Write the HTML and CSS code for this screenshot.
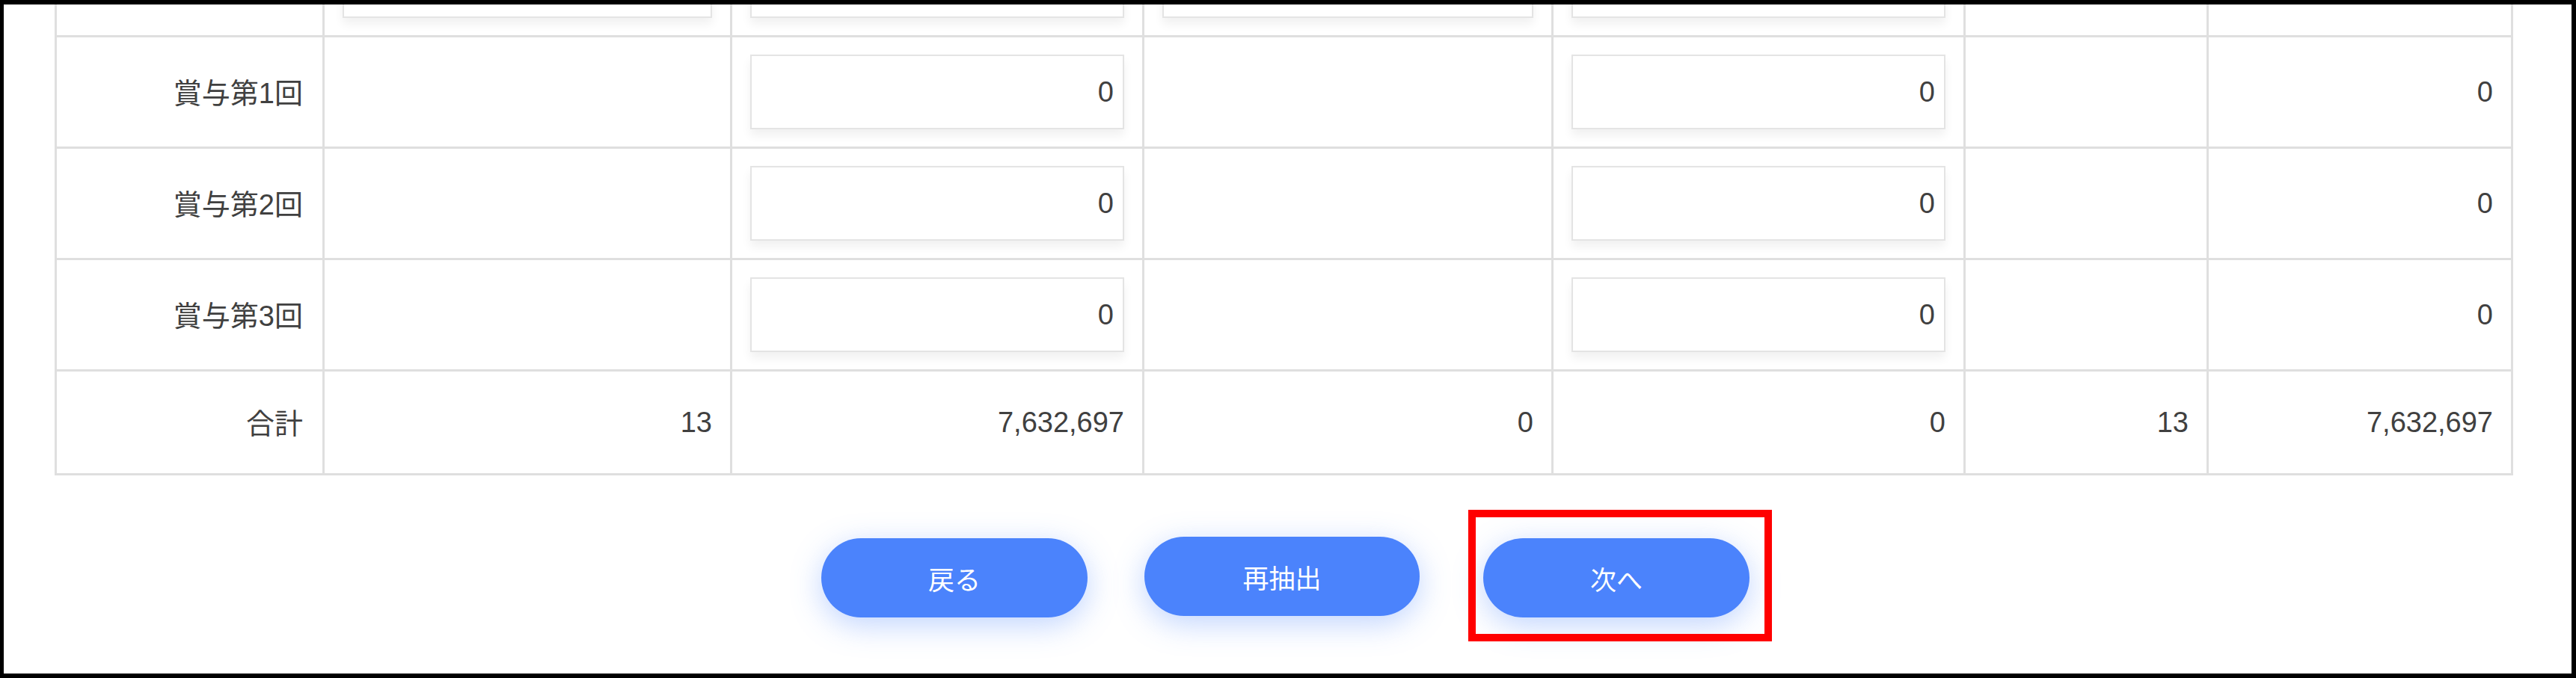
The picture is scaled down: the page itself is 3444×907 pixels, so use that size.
FILE: index.html
```html
<!DOCTYPE html>
<html lang="ja">
<head>
    <meta charset="UTF-8">
    <title>賞与入力</title>
    <link rel="stylesheet" href="styles.css">
</head>
<body>
    <div class="screen">
        <div class="sheet">
            <table class="grid">
                <colgroup>
                    <col class="col-label">
                    <col class="col-a">
                    <col class="col-b">
                    <col class="col-c">
                    <col class="col-d">
                    <col class="col-e">
                    <col class="col-f">
                </colgroup>
                <tbody>
                    <tr class="row-input">
                        <th></th>
                        <td><input class="num-input" type="text" value="0"></td>
                        <td><input class="num-input" type="text" value="0"></td>
                        <td><input class="num-input" type="text" value="0"></td>
                        <td><input class="num-input" type="text" value="0"></td>
                        <td></td>
                        <td></td>
                    </tr>
                    <tr class="row-input">
                        <th>賞与第1回</th>
                        <td></td>
                        <td><input class="num-input" type="text" value="0"></td>
                        <td></td>
                        <td><input class="num-input" type="text" value="0"></td>
                        <td></td>
                        <td>0</td>
                    </tr>
                    <tr class="row-input">
                        <th>賞与第2回</th>
                        <td></td>
                        <td><input class="num-input" type="text" value="0"></td>
                        <td></td>
                        <td><input class="num-input" type="text" value="0"></td>
                        <td></td>
                        <td>0</td>
                    </tr>
                    <tr class="row-input">
                        <th>賞与第3回</th>
                        <td></td>
                        <td><input class="num-input" type="text" value="0"></td>
                        <td></td>
                        <td><input class="num-input" type="text" value="0"></td>
                        <td></td>
                        <td>0</td>
                    </tr>
                    <tr class="row-total">
                        <th>合計</th>
                        <td>13</td>
                        <td>7,632,697</td>
                        <td>0</td>
                        <td>0</td>
                        <td>13</td>
                        <td>7,632,697</td>
                    </tr>
                </tbody>
            </table>
        </div>
        <div class="actions">
            <button class="btn">戻る</button>
            <button class="btn btn-wide">再抽出</button>
            <button class="btn btn-next">次へ</button>
        </div>
    </div>
</body>
</html>
```

FILE: styles.css
```css
* {
    box-sizing: border-box;
    margin: 0;
    padding: 0;
    font-family: "Liberation Sans", "Noto Sans CJK JP", sans-serif;
}
body {
    background: #000;
}
.screen {
    width: 3444px;
    height: 907px;
    border: 6px solid #000;
    border-left-width: 5px;
    background: #fff;
    overflow: hidden;
}
.sheet {
    margin: -108px 0 0 68px;
}
.grid {
    table-layout: fixed;
    width: 3284px;
    border-collapse: collapse;
    color: #404040;
    font-size: 38px;
}
.col-label { width: 358px; }
.col-a { width: 545px; }
.col-b { width: 551px; }
.col-c { width: 547px; }
.col-d { width: 551px; }
.col-e { width: 325px; }
.col-f { width: 407px; }
.grid th,
.grid td {
    border: 3px solid #dfdfdf;
    padding: 0 24px;
    text-align: right;
    vertical-align: middle;
    font-weight: normal;
}
.grid th {
    padding-right: 26px;
    padding-bottom: 4px;
}
.row-input {
    height: 149px;
}
.row-total {
    height: 139px;
}
.num-input {
    display: block;
    width: 100%;
    height: 100px;
    padding: 0 12px;
    border: 2px solid #e4e4e4;
    outline: none;
    background: #fff;
    color: #404040;
    font-size: 38px;
    text-align: right;
    box-shadow: 0 8px 12px rgba(0, 0, 0, 0.06);
}
.actions {
    display: flex;
    justify-content: center;
    align-items: center;
    gap: 76px;
    margin-top: 84px;
    padding-right: 6px;
}
.btn {
    width: 356px;
    height: 106px;
    border: none;
    border-radius: 53px;
    background: #4b83fc;
    color: #fff;
    font-size: 35px;
    box-shadow: 0 10px 40px rgba(75, 131, 252, 0.35);
    cursor: pointer;
}
.btn-wide {
    width: 368px;
    margin-top: -4px;
}
.btn-next {
    position: relative;
    margin-left: 9px;
}
.btn-next::after {
    content: "";
    position: absolute;
    top: -38px;
    left: -20px;
    right: -30px;
    bottom: -32px;
    border: 10px solid #ff0000;
}
```
